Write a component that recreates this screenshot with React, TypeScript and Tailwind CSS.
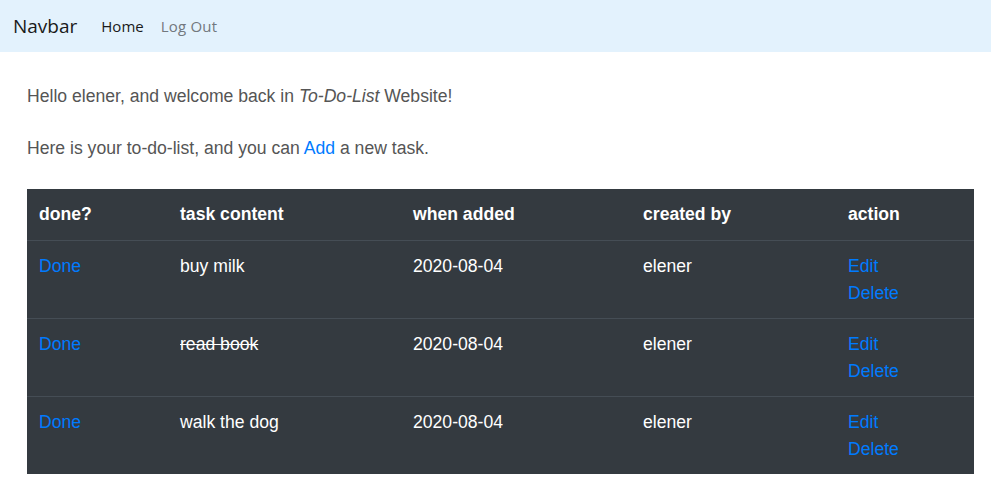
import React from "react";

const rows = [
  { task: "buy milk", done: false },
  { task: "read book", done: true },
  { task: "walk the dog", done: false },
];

export default function App() {
  const head = "px-[12px] pt-[12px] pb-[12px] align-top font-bold";
  const cell = "px-[12px] pt-[12px] pb-[11px] align-top";
  return (
    <div className="min-h-[500px] bg-white" style={{ fontFamily: '"Liberation Sans", Arial, sans-serif' }}>
      <nav className="h-[52px] bg-[#e3f2fd] flex items-center pl-[13px]" style={{ fontFamily: '"Open Sans", "Noto Sans", sans-serif' }}>
        <span className="text-[19px] text-[#1a1a1a] mr-[24px] leading-none">Navbar</span>
        <span className="text-[15px] text-[#1a1a1a] mr-[17px] leading-none">Home</span>
        <span className="text-[15px] text-[#72787e] leading-none tracking-[0.2px]">Log Out</span>
      </nav>
      <div className="pl-[27px] pr-[17px] pt-[31px] text-[17.6px] leading-[27px] text-[#555]">
        <p>
          Hello elener, and welcome back in <i>To-Do-List</i> Website!
        </p>
        <p className="mt-[25px]">
          Here is your to-do-list, and you can <span className="text-[#007bff]">Add</span> a new task.
        </p>
        <table className="mt-[27px] w-full bg-[#343a40] text-white border-collapse text-left">
          <thead>
            <tr>
              <th className={`${head} w-[141px]`}>done?</th>
              <th className={`${head} w-[233px]`}>task content</th>
              <th className={`${head} w-[230px]`}>when added</th>
              <th className={`${head} w-[205px]`}>created by</th>
              <th className={head}>action</th>
            </tr>
          </thead>
          <tbody>
            {rows.map((r) => (
              <tr key={r.task} className="border-t border-[#454d55]">
                <td className={`${cell} text-[#007bff]`}>Done</td>
                <td className={`${cell} ${r.done ? "line-through" : ""}`}>{r.task}</td>
                <td className={cell}>2020-08-04</td>
                <td className={cell}>elener</td>
                <td className={`${cell} text-[#007bff]`}>
                  <div>Edit</div>
                  <div>Delete</div>
                </td>
              </tr>
            ))}
          </tbody>
        </table>
      </div>
    </div>
  );
}
